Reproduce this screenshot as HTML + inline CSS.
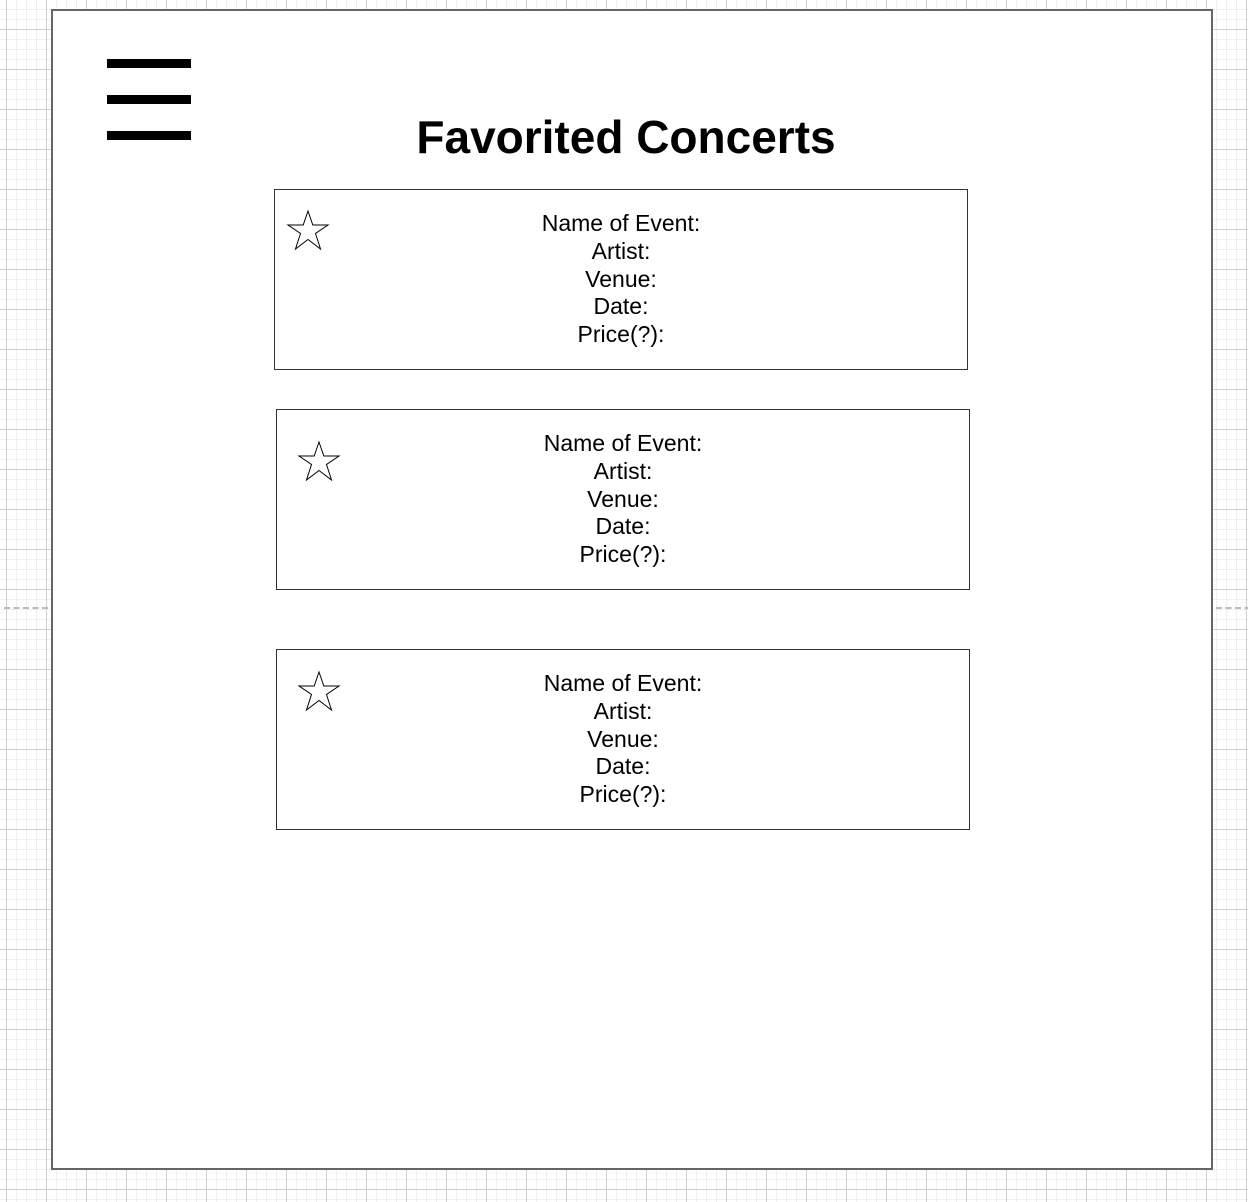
<!DOCTYPE html>
<html><head><meta charset="utf-8"><style>
html,body{margin:0;padding:0}
body{width:1248px;height:1202px;position:relative;overflow:hidden;font-family:"Liberation Sans",Arial,sans-serif;
background-color:#fff;
background-image:
linear-gradient(to right,#cfcfcf 1px,transparent 1px),
linear-gradient(to bottom,#cfcfcf 1px,transparent 1px),
linear-gradient(to right,#efefef 1px,transparent 1px),
linear-gradient(to bottom,#efefef 1px,transparent 1px);
background-size:40px 40px,40px 40px,10px 10px,10px 10px;
background-position:6px 29px,6px 29px,6px 9px,6px 9px;}
.frame{position:absolute;left:51px;top:9px;width:1158px;height:1157px;border:2px solid #666;background:#fff;box-sizing:content-box}
.bar{position:absolute;left:107px;width:84px;height:9px;background:#000}
h1{position:absolute;left:0;width:1252px;top:110px;margin:0;text-align:center;font-size:46px;font-weight:bold;color:#000}
.card{position:absolute;width:694px;height:181px;border:1px solid #333;background:#fff;box-sizing:border-box}
.card .t{position:absolute;left:0;right:0;top:20px;text-align:center;font-size:23px;line-height:27.8px;color:#000}
.card svg{position:absolute;left:10px;top:18px}
.dash{position:absolute;top:607px;height:0;border-top:2px dashed #bbb;width:44px}
</style></head><body>
<div class="dash" style="left:4px"></div>
<div class="dash" style="left:1216px"></div>
<div class="frame"></div>
<div class="bar" style="top:59px"></div>
<div class="bar" style="top:95px"></div>
<div class="bar" style="top:131px"></div>
<h1>Favorited Concerts</h1>

<div class="card" style="left:274px;top:189px">
<svg width="46" height="46" viewBox="0 0 46 46" style="left:9px"><polygon points="24,3 28.8,17 44,17 31.5,25.5 36.5,41 24,31.5 11.5,41 16.5,25.5 4,17 19.2,17" fill="#fff" stroke="#000" stroke-width="1"/></svg>
<div class="t">Name of Event:<br>Artist:<br>Venue:<br>Date:<br>Price(?):</div></div>

<div class="card" style="left:276px;top:409px">
<svg width="46" height="46" viewBox="0 0 46 46" style="left:18px;top:29px"><polygon points="24,3 28.8,17 44,17 31.5,25.5 36.5,41 24,31.5 11.5,41 16.5,25.5 4,17 19.2,17" fill="#fff" stroke="#000" stroke-width="1"/></svg>
<div class="t">Name of Event:<br>Artist:<br>Venue:<br>Date:<br>Price(?):</div></div>

<div class="card" style="left:276px;top:649px">
<svg width="46" height="46" viewBox="0 0 46 46" style="left:18px;top:19px"><polygon points="24,3 28.8,17 44,17 31.5,25.5 36.5,41 24,31.5 11.5,41 16.5,25.5 4,17 19.2,17" fill="#fff" stroke="#000" stroke-width="1"/></svg>
<div class="t">Name of Event:<br>Artist:<br>Venue:<br>Date:<br>Price(?):</div></div>
</body></html>
